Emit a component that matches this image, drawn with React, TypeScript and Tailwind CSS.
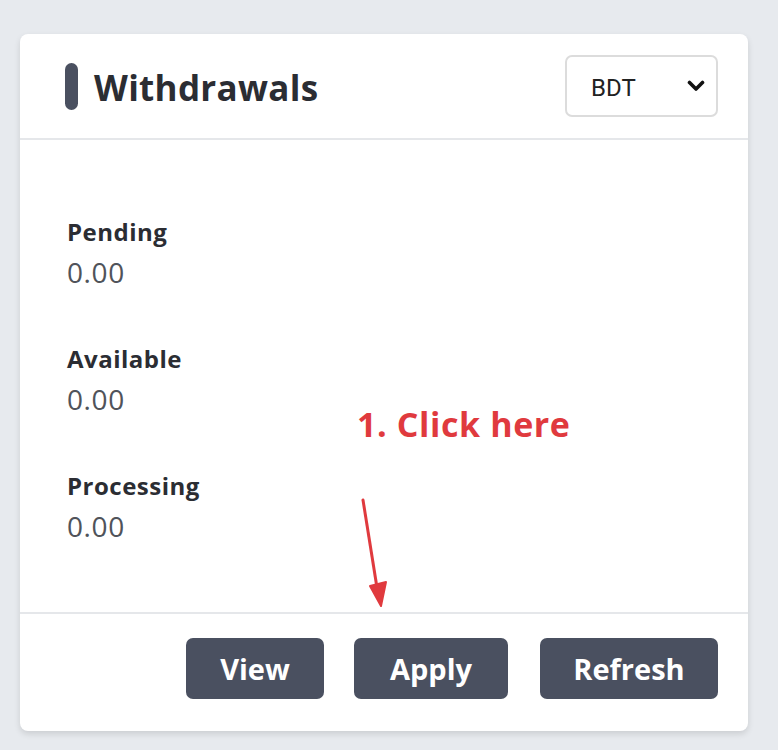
import React, { useState } from 'react';

const font = { fontFamily: '"Open Sans", "Noto Sans", sans-serif' };

export default function App() {
  const [cur, setCur] = useState('BDT');
  const stats = [
    { label: 'Pending', value: '0.00' },
    { label: 'Available', value: '0.00' },
    { label: 'Processing', value: '0.00' },
  ];

  return (
    <div className="min-h-[750px] w-[778px] bg-[#e7eaee] pt-[34px] pl-[20px]" style={font}>
      <div className="relative w-[728px] h-[697px] bg-white rounded-[8px] shadow-[0_3px_6px_rgba(0,0,0,0.12)] flex flex-col">
        <div className="h-[106px] flex items-center justify-between pl-[45px] pr-[30px] border-b-2 border-[#e5e7ea]">
          <div className="flex items-center gap-[16px]">
            <div className="w-[13px] h-[47px] rounded-full bg-[#4a5060]" />
            <h2 className="text-[35px] font-bold text-[#2b2d33] tracking-[0.3px] leading-none pt-[3px]">Withdrawals</h2>
          </div>
          <div className="relative w-[153px] h-[62px] border-2 border-[#dcdcdc] rounded-[7px] flex items-center">
            <select
              value={cur}
              onChange={e => setCur(e.target.value)}
              className="appearance-none w-full h-full bg-transparent pl-[24px] pt-[4px] text-[24px] text-[#222] outline-none"
              style={{ fontFamily: 'Roboto, "Noto Sans", sans-serif' }}
            >
              <option value="BDT">BDT</option>
              <option value="USD">USD</option>
            </select>
            <svg className="absolute right-[11px] top-[23px] pointer-events-none" width="18" height="12" viewBox="0 0 18 12">
              <path d="M2.5 2.5 L9 9 L15.5 2.5" fill="none" stroke="#111" strokeWidth="3.6" strokeLinecap="round" strokeLinejoin="round" />
            </svg>
          </div>
        </div>

        <div className="flex-1 flex flex-col gap-[48px] pl-[47px] pt-[74px] border-b-2 border-[#e5e7ea]">
          {stats.map(s => (
            <div key={s.label} className="flex flex-col">
              <span className="text-[24px] font-bold text-[#2b2d33] leading-[36px] tracking-[0.5px]">{s.label}</span>
              <span className="text-[28px] text-[#50535a] leading-[42px] tracking-[0.6px] pt-[1px]">{s.value}</span>
            </div>
          ))}
        </div>

        <div className="h-[117px] flex items-center justify-end pr-[30px] pb-[8px]">
          <button className="w-[138px] h-[61px] rounded-[7px] bg-[#4a5060] text-white text-[29px] font-bold">View</button>
          <button className="ml-[30px] w-[154px] h-[61px] rounded-[7px] bg-[#4a5060] text-white text-[29px] font-bold">Apply</button>
          <button className="ml-[32px] w-[178px] h-[61px] rounded-[7px] bg-[#4a5060] text-white text-[29px] font-bold">Refresh</button>
        </div>

        <div className="absolute left-[337px] top-[373px] text-[34px] font-bold text-[#e03a3e] leading-none tracking-[0.6px]">1. Click here</div>
        <svg className="absolute left-[330px] top-[460px]" width="60" height="115" viewBox="0 0 60 115">
          <path d="M13 6 L28 100" stroke="#e03a3e" strokeWidth="3" strokeLinecap="round" />
          <path d="M20 92 L31 112 L36 88 Z" fill="#e03a3e" stroke="#e03a3e" strokeWidth="2" strokeLinejoin="round" />
        </svg>
      </div>
    </div>
  );
}
